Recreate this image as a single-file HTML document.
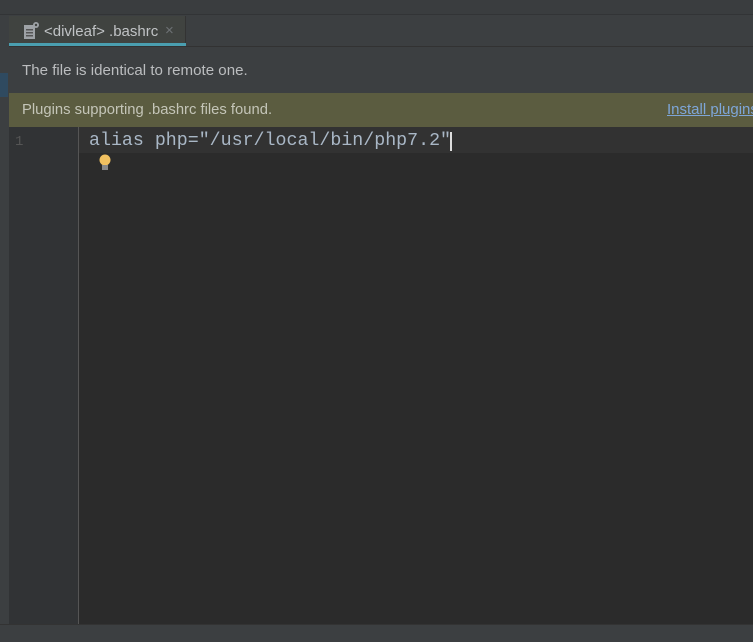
<!DOCTYPE html>
<html><head><style>
body{margin:0;width:753px;height:642px;overflow:hidden;background:#2b2b2b;font-family:"Liberation Sans",sans-serif;position:relative}
div{position:absolute;box-sizing:border-box}
</style></head><body>
<div style="left:0;top:0;width:753px;height:15px;background:#3a3d3f;border-bottom:1px solid #323436"></div>
<div style="left:0;top:15px;width:9px;height:612px;background:#3c3f41"></div>
<div style="left:0;top:73px;width:8px;height:24px;background:#2f4a60"></div>
<div style="left:9px;top:15px;width:744px;height:32px;background:#3c3f41;border-bottom:1px solid #323232"></div>
<div style="left:9px;top:16px;width:177px;height:30px;background:#404340;border-right:1px solid #333"></div>
<div style="left:9px;top:43px;width:177px;height:3px;background:#4a9eb0"></div>
<svg style="position:absolute;left:23px;top:21px" width="18" height="20"><rect x="1" y="4" width="11" height="14" fill="#9ea2a6"/><rect x="3" y="8" width="7" height="1.5" fill="#555"/><rect x="3" y="11" width="7" height="1.5" fill="#555"/><rect x="3" y="14" width="7" height="1.5" fill="#555"/><circle cx="13" cy="4" r="3" fill="#9ea2a6"/><circle cx="13" cy="4" r="1.2" fill="#404340"/></svg>
<div style="left:44px;top:23px;font-size:15px;color:#c0c3c5;white-space:nowrap">&lt;divleaf&gt; .bashrc</div>
<div style="left:165px;top:22px;font-size:15px;color:#6e7275">×</div>
<div style="left:9px;top:47px;width:744px;height:46px;background:#3c3f41"></div>
<div style="left:22px;top:62px;font-size:15.1px;color:#bbbdbf;white-space:nowrap">The file is identical to remote one.</div>
<div style="left:9px;top:93px;width:744px;height:34px;background:#5b5c40"></div>
<div style="left:22px;top:102px;font-size:14.8px;color:#c4c5b8;white-space:nowrap">Plugins supporting .bashrc files found.</div>
<div style="left:667px;top:101px;font-size:15px;color:#7ea6d8;text-decoration:underline;white-space:nowrap">Install plugins</div>
<div style="left:9px;top:127px;width:69px;height:497px;background:#313335"></div>
<div style="left:78px;top:127px;width:1px;height:497px;background:#555"></div>
<div style="left:79px;top:127px;width:674px;height:26px;background:#323232"></div>
<div style="left:15px;top:134px;font-size:14px;color:#555;font-family:'Liberation Mono',monospace">1</div>
<div style="left:89px;top:131px;font-size:18.3px;color:#a9b7c6;font-family:'Liberation Mono',monospace;white-space:nowrap">alias php="/usr/local/bin/php7.2"</div>
<div style="left:450px;top:132px;width:2px;height:19px;background:#ddd"></div>
<svg style="position:absolute;left:98px;top:154px" width="14" height="18"><circle cx="7" cy="6" r="5.5" fill="#f0c060"/><rect x="4" y="11" width="6" height="5" fill="#888"/></svg>
<div style="left:0;top:624px;width:753px;height:18px;background:#3c3f41;border-top:1px solid #333"></div>
</body></html>
